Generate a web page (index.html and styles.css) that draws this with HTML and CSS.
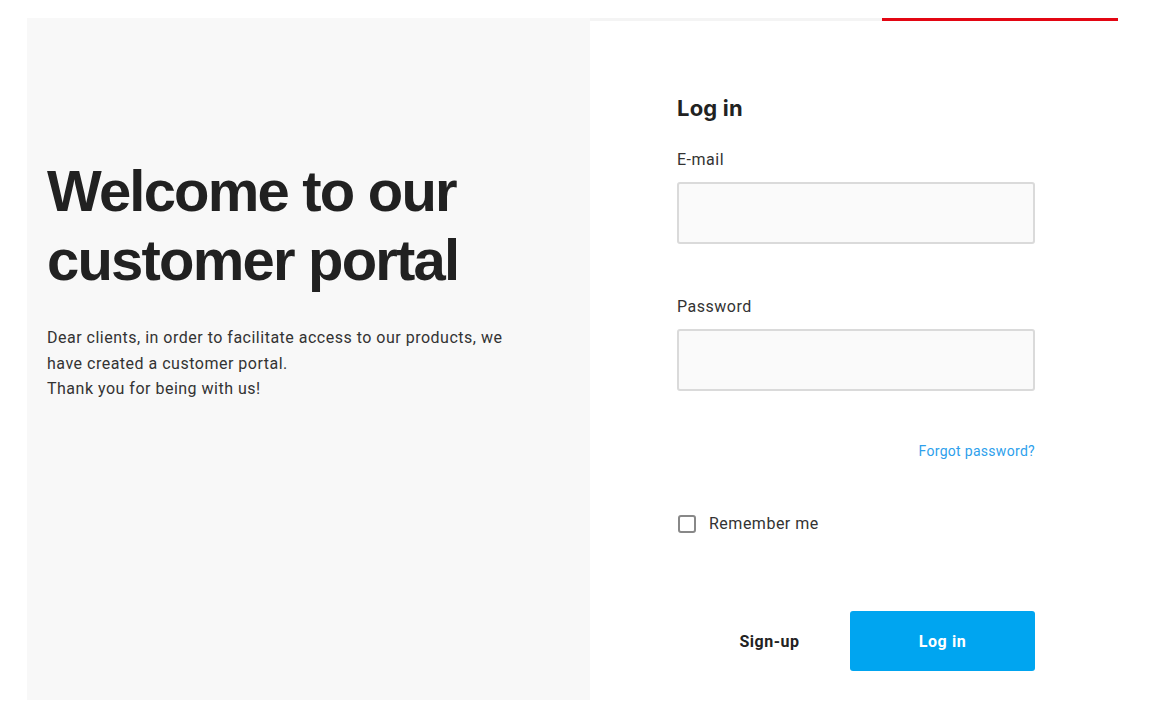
FILE: index.html
```html
<!DOCTYPE html>
<html lang="en">
<head>
<meta charset="UTF-8">
<meta name="viewport" content="width=device-width, initial-scale=1.0">
<title>Customer portal</title>
<link rel="stylesheet" href="styles.css">
</head>
<body>
<div class="page">
    <div class="intro">
        <h1>Welcome to our customer portal</h1>
        <p>Dear clients, in order to facilitate access to our products, we have created a customer portal.<br>Thank you for being with us!</p>
    </div>
    <div class="auth">
        <div class="progress"><div class="progress-bar"></div></div>
        <form class="login-form" onsubmit="return false">
            <h2>Log in</h2>
            <label class="field-label" for="email">E-mail</label>
            <input class="field" id="email" type="email">
            <label class="field-label label-password" for="password">Password</label>
            <input class="field" id="password" type="password">
            <div class="forgot"><a href="#">Forgot password?</a></div>
            <label class="remember"><input type="checkbox"><span class="box"></span>Remember me</label>
            <div class="actions">
                <a href="#" class="signup">Sign-up</a>
                <button class="login-btn" type="submit">Log in</button>
            </div>
        </form>
    </div>
</div>
</body>
</html>
```

FILE: styles.css
```css
body {
    font-family: Roboto, "Liberation Sans", sans-serif;
    margin: 0;
    background-color: #fff;
    color: #333;
    letter-spacing: 0.5px;
}
.page {
    display: flex;
    margin: 18px 0 0 27px;
    width: 1091px;
    height: 682px;
}
.intro {
    width: 543px;
    padding: 138px 0 0 20px;
    background-color: #f8f8f8;
}
.intro h1 {
    font-family: "Liberation Sans", Arial, sans-serif;
    font-weight: bold;
    font-size: 58px;
    line-height: 69px;
    letter-spacing: -1.8px;
    color: #212121;
    margin: 0 0 31px;
}
.intro p {
    max-width: 480px;
    margin: 0;
    font-size: 16px;
    line-height: 25.6px;
    color: #333;
}
.auth {
    flex: 1;
    display: flex;
    flex-direction: column;
}
.progress {
    height: 3px;
    background-color: #f4f4f4;
}
.progress-bar {
    margin-left: 292px;
    width: 236px;
    height: 3px;
    background-color: #e30613;
}
.login-form {
    display: flex;
    flex-direction: column;
    width: 358px;
    padding: 73px 0 0 87px;
}
.login-form h2 {
    font-family: Inter, Roboto, sans-serif;
    font-size: 22px;
    font-weight: 700;
    line-height: 28px;
    letter-spacing: 0.2px;
    color: #222;
    margin: 0 0 28px;
}
.field-label {
    font-size: 16px;
    line-height: 20px;
    color: #333;
    margin-bottom: 12px;
}
.label-password {
    margin-top: 53px;
}
.field {
    box-sizing: border-box;
    height: 62px;
    border: 2px solid #dadada;
    border-radius: 3px;
    background-color: #fafafa;
    padding: 0 14px;
    font-size: 16px;
    font-family: inherit;
    outline: none;
}
.forgot {
    text-align: right;
    margin-top: 50px;
    line-height: 20px;
}
.forgot a {
    font-size: 14px;
    letter-spacing: 0.3px;
    color: #2e9fec;
    text-decoration: none;
}
.remember {
    display: flex;
    align-items: center;
    margin-top: 53px;
    font-size: 16px;
    line-height: 20px;
    color: #333;
    cursor: pointer;
}
.remember input {
    display: none;
}
.remember .box {
    box-sizing: border-box;
    width: 18px;
    height: 18px;
    border: 2px solid #888;
    border-radius: 3px;
    margin: 0 13px 0 1px;
    background: #fff;
}
.actions {
    display: flex;
    align-items: center;
    margin-top: 77px;
}
.signup {
    flex: 1;
    padding-left: 12px;
    text-align: center;
    font-size: 16px;
    font-weight: 700;
    color: #222;
    text-decoration: none;
}
.login-btn {
    width: 185px;
    height: 60px;
    border: none;
    border-radius: 3px;
    background-color: #00a5f0;
    color: #fff;
    font-family: inherit;
    font-size: 16px;
    font-weight: 700;
    letter-spacing: 0.6px;
    cursor: pointer;
}
```
